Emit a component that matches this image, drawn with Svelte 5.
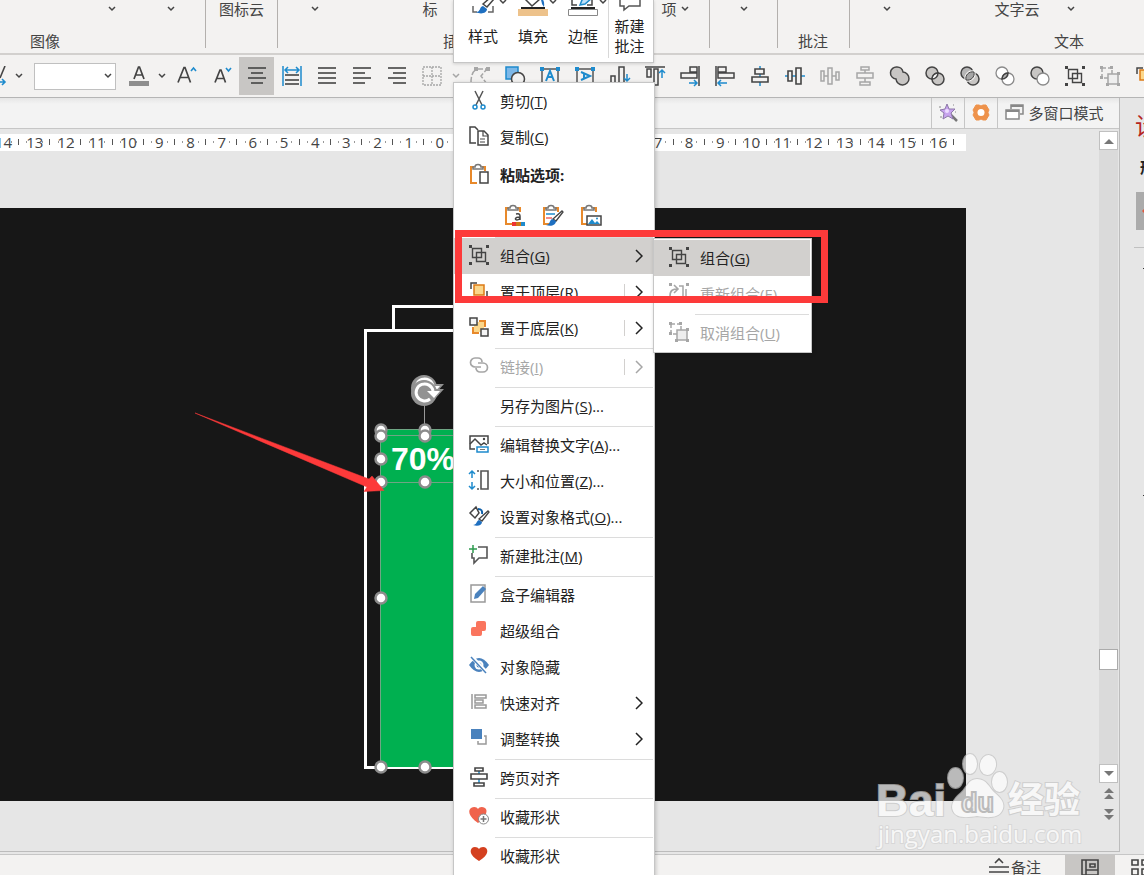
<script>
    const dark = "#444";
    const blue = "#1e8bcd";
    const grey = "#a6a6a6";

    const clipboard = `<path d="M5 3H2v16h6M13 3h3v4" fill="none" stroke="#e8892b" stroke-width="2"/><path d="M4 5V3h2a3 2.500 0 0 1 6 0h2v2z" fill="#fff" stroke="#777" stroke-width="1.500"/>`;

    const lines = (rows) => rows.map(([x, y, w]) => `<path d="M${x} ${y}h${w}" stroke="${dark}" stroke-width="1.6"/>`).join("");

    const groupShape = (c) =>
        `<path d="M3.500 3.500h9v9h-9zM7.500 7.500h9v9h-9z" fill="none" stroke="${c}" stroke-width="1.4"/>
         <path d="M0 0h3v3H0zM17 0h3v3h-3zM0 17h3v3H0zM17 17h3v3h-3z" fill="${c}"/>`;

    const ungroupShape =
        `<path d="M2 2h10v10H2z" fill="none" stroke="${grey}" stroke-width="1.5" stroke-dasharray="4 2"/><path d="M8 8h10v10H8z" fill="#eee" stroke="${grey}" stroke-width="1.5"/>
         <path d="M0 0h3v3H0zM10 0h3v3h-3zM0 10h3v3H0zM17 6h3v3h-3zM6 17h3v3H6zM17 17h3v3h-3z" fill="${grey}"/>`;

    // Every icon is drawn on a 20 x 20 grid
    const icons = {
        fontColor: `<path d="M5 13 9.500 1h1L15 13M6.500 9h7" fill="none" stroke="${dark}" stroke-width="1.7"/><path d="M0 15h20v5H0z" fill="#8e8e8e"/>`,
        fontUp: `<path d="M1 16.500 7 1.500h1l5.500 15M3 11.500h9" fill="none" stroke="${dark}" stroke-width="1.7"/><path d="m14 5 2.500-3L19 5" fill="none" stroke="${blue}" stroke-width="1.6"/>`,
        fontDown: `<path d="M3 16.500 8 4h1l4.500 12.500M5 12.500h7" fill="none" stroke="${dark}" stroke-width="1.7"/><path d="m14 2 2.500 3L19 2" fill="none" stroke="${blue}" stroke-width="1.6"/>`,
        center: lines([[1, 2, 18], [4, 7, 12], [1, 12, 18], [4, 17, 12]]),
        distribute: `<path d="M1 0v20M19 0v20M3 4h14M6 1 3 4l3 3M14 1l3 3-3 3" fill="none" stroke="${blue}" stroke-width="1.500"/>` + lines([[3, 9, 14], [3, 14, 14], [3, 18, 14]]),
        justify: lines([[1, 2, 18], [1, 7, 18], [1, 12, 18], [1, 17, 18]]),
        left: lines([[1, 2, 18], [1, 7, 12], [1, 12, 18], [1, 17, 12]]),
        right: lines([[1, 2, 18], [6, 7, 13], [1, 12, 18], [6, 17, 13]]),
        borders: `<path d="M1 1h18v18H1zM10 1v18M1 10h18" fill="none" stroke="${grey}" stroke-width="1.300" stroke-dasharray="2 1"/>`,
        editPoints: `<path d="M1 17C1 9 3 4 8 3h9l-6 7 6 8" fill="none" stroke="${grey}" stroke-width="1.500" stroke-dasharray="6 2"/><path d="M4 1h4v4H4zM16 1h4v4h-4z" fill="${grey}"/>`,
        shapes: `<path d="M1 1h12v12H1z" fill="#7db8e8" stroke="${blue}" stroke-width="1.500"/><circle cx="13" cy="13" r="6.500" fill="#f3f2f1" stroke="${dark}" stroke-width="1.500"/>`,
        textBox: `<path d="M2 3h16v16H2z" fill="none" stroke="#555" stroke-width="1.500"/><path d="M0 1h4v4H0zM16 1h4v4h-4z" fill="${blue}"/><path d="m6 15 4-10 4 10M7 11h6" fill="none" stroke="${blue}" stroke-width="2"/>`,
        textTurn: `<path d="M2 3h16v16H2z" fill="none" stroke="#555" stroke-width="1.500"/><path d="M0 1h4v4H0zM16 1h4v4h-4z" fill="${blue}"/><path d="m6 6 9 4-9 4M9 7v6" fill="none" stroke="${blue}" stroke-width="2"/>`,
        alignBottom: `<path d="M1 10h4v8H1zM9 1h5v17H9zM0 19h20" fill="none" stroke="${dark}" stroke-width="1.500"/><path d="M17 8v7m-3-3 3 3 3-3" fill="none" stroke="${blue}" stroke-width="1.500"/>`,
        alignTop: `<path d="M0 1h20M2 3h4v8H2zM9 3h4v16H9z" fill="none" stroke="${dark}" stroke-width="1.500"/><path d="M17 12V4m-3 3 3-3 3 3" fill="none" stroke="${blue}" stroke-width="1.500"/>`,
        alignRight: `<path d="M19 0v20M10 1h7v5h-7zM1 7h16v5H1z" fill="none" stroke="${dark}" stroke-width="1.500"/><path d="M9 17h8m-3-3 3 3-3 3" fill="none" stroke="${blue}" stroke-width="1.500"/>`,
        alignLeft: `<path d="M1 0v20M3 1h8v5H3zM3 7h16v5H3z" fill="none" stroke="${dark}" stroke-width="1.500"/><path d="M12 17H3m3-3-3 3 3 3" fill="none" stroke="${blue}" stroke-width="1.500"/>`,
        alignMiddle: `<path d="M10 0v20" stroke="${blue}" stroke-width="1.500"/><path d="M5 3h9v5H5zM2 11h16v5H2z" fill="#f3f2f1" stroke="${dark}" stroke-width="1.600"/>`,
        alignCenter: `<path d="M0 10h20" stroke="${blue}" stroke-width="1.500"/><path d="M3 5h4v10H3zM11 2h5v16h-5z" fill="#f3f2f1" stroke="${dark}" stroke-width="1.600"/>`,
        spreadH: `<path d="M1 5h3v10H1zM8 2h4v16H8zM16 6h3v8h-3zM4 10h4M12 10h4" fill="none" stroke="${grey}" stroke-width="1.500"/>`,
        spreadV: `<path d="M6 1h8v3H6zM2 7h16v5H2zM5 16h10v3H5zM10 4v3M10 12v4" fill="none" stroke="${grey}" stroke-width="1.500"/>`,
        union: `<path d="M7 1a6 6 0 0 1 6 5 6.500 6.500 0 1 1-7 7A6 6 0 1 1 7 1z" fill="#c8c6c4" stroke="${dark}" stroke-width="1.500"/>`,
        combine: `<circle cx="7" cy="7" r="6" fill="#c8c6c4" stroke="${dark}" stroke-width="1.500"/><circle cx="13" cy="13" r="6" fill="#c8c6c4" stroke="${dark}" stroke-width="1.500"/><path d="M7 13a6 6 0 0 1 6-6 6 6 0 0 1-6 6z" fill="#fff" stroke="${dark}" stroke-width="1.500"/>`,
        fragment: `<circle cx="7" cy="7" r="6" fill="#b5b5b5" stroke="${dark}" stroke-width="1.500"/><circle cx="13" cy="13" r="7" fill="#f3f2f1"/><circle cx="13" cy="13" r="6" fill="#c8c6c4" stroke="${dark}" stroke-width="1.500"/><path d="M6 14c-1-5 3-9 8-8 1 5-3 9-8 8z" fill="#a6a6a6" stroke="#f3f2f1" stroke-width="3"/><path d="M6 14c-1-5 3-9 8-8 1 5-3 9-8 8z" fill="#a6a6a6" stroke="${dark}"/>`,
        intersect: `<circle cx="7" cy="7" r="6" fill="#fff" stroke="#8a8a8a" stroke-width="1.300"/><circle cx="13" cy="13" r="6" fill="#fff" stroke="#8a8a8a" stroke-width="1.300"/><path d="M7 13a6 6 0 0 1 6-6 6 6 0 0 1-6 6z" fill="#b5b5b5" stroke="${dark}" stroke-width="1.600"/>`,
        subtract: `<circle cx="7" cy="7" r="6" fill="#c8c6c4" stroke="${dark}" stroke-width="1.500"/><circle cx="13" cy="13" r="6" fill="#fff" stroke="#8a8a8a" stroke-width="1.300"/>`,
        group: groupShape(dark),
        ungroup: ungroupShape,
        regroup: `<path d="M10 3h4v14M6 16h11V6" fill="none" stroke="${grey}" stroke-width="1.500"/><path d="M1 13c0-6 3-7 8-7M5 2l4 4-4 4" fill="none" stroke="${grey}" stroke-width="1.600"/><path d="M0 0h3v3H0zM17 0h3v3h-3zM0 17h3v3H0zM17 17h3v3h-3z" fill="${grey}"/>`,
        front: `<path d="M8 2H2v6M18 10v8h-8" fill="none" stroke="${dark}" stroke-width="1.500"/><path d="M5 4h10v10H5z" fill="#fbd78b" stroke="#dd7b16" stroke-width="1.500"/>`,
        back: `<path d="M10 4h6v6M4 10v6h6" fill="none" stroke="#e8892b" stroke-width="2"/><path d="M5 5h10v10H5z" fill="#fbd78b"/><path d="M1 1h7v7H1zM12 12h7v7h-7z" fill="#f5f5f5" stroke="${dark}" stroke-width="1.500"/>`,
        cut: `<path d="M6 1l7 14M14 1 7 15" stroke="#555" stroke-width="1.500"/><circle cx="6" cy="17" r="2" fill="none" stroke="${blue}" stroke-width="1.500"/><circle cx="14" cy="17" r="2" fill="none" stroke="${blue}" stroke-width="1.500"/>`,
        copy: `<path d="M7 17H1V1h5l3 3" fill="none" stroke="${dark}" stroke-width="1.500"/><path d="M9 5h6l4 4v10H9z" fill="#fff" stroke="${dark}" stroke-width="1.500"/><path d="M14 5v5h5M11 13h5M11 16h5" fill="none" stroke="${dark}" stroke-width="1.200"/>`,
        paste: clipboard + `<path d="M11 8h8v11h-8z" fill="#fff" stroke="${dark}" stroke-width="1.500"/>`,
        pasteTheme: clipboard + `<path d="M12 9c5-1 4 2 4 6M16 12c-6 0-5 3-3 3q2 0 3-2" fill="none" stroke="${dark}" stroke-width="1.500"/><path d="M8 17h4v4H8z" fill="#e33"/><path d="M12 17h5v4h-5z" fill="#d07a18"/><path d="M17 17h4v4h-4z" fill="${blue}"/>`,
        pasteSource: clipboard + `<path d="M4 9h9" stroke="${blue}" stroke-width="1.500"/><path d="M4 13h6" stroke="#e66" stroke-width="1.500"/><path d="m11 14 9-8 1 1-7 9z" fill="#fff" stroke="${dark}" stroke-width="1.300"/><path d="M4 20c4 0 3-4 6-6l4 2c0 4-5 6-10 4z" fill="#1e6fc0"/>`,
        pastePicture: clipboard + `<path d="M7 11h14v9H7z" fill="#fff" stroke="${dark}" stroke-width="1.500"/><path d="m8 19 4-5 3 4 2-2 3 3z" fill="${blue}"/><circle cx="17" cy="13.500" r="1" fill="${blue}"/>`,
        link: `<path d="M12 11H6a4 4 0 0 1 0-9h3a4 4 0 0 1 4 4M9 7h5a4 4 0 0 1 0 9h-3a4 4 0 0 1-4-4" fill="none" stroke="${grey}" stroke-width="1.700"/>`,
        altText: `<path d="M6 15H1V2h18v8" fill="none" stroke="${dark}" stroke-width="1.500"/><path d="m1 10 5-5 6 6 3-2 3 2" fill="none" stroke="${dark}" stroke-width="1.500"/><circle cx="15" cy="5" r="1.200" fill="${dark}"/><path d="M8 13h11v5H8z" fill="#fff" stroke="${blue}" stroke-width="1.500"/><path d="M11 15.500h5" stroke="#777"/>`,
        size: `<path d="M3 1v7M0 4l3-3 3 3M3 12v7M0 16l3 3 3-3" fill="none" stroke="${blue}" stroke-width="1.500"/><path d="M8 1h2M8 19h2" stroke="#555" stroke-width="1.500"/><path d="M12 1h7v18h-7z" fill="none" stroke="#555" stroke-width="1.600"/>`,
        format: `<path d="m1 7 6-6 3 6-4 5z" fill="#fff" stroke="${dark}" stroke-width="1.500"/><path d="M9 3q5 0 4 5" fill="none" stroke="#0c5ea8" stroke-width="2"/><path d="m10 13 9-8 1 1-7 9z" fill="#fff" stroke="${dark}" stroke-width="1.300"/><path d="M4 19c4 0 3-4 6-5l3 2c0 3-4 5-9 3z" fill="#1e6fc0"/>`,
        comment: `<path d="M9 2h9v11H10l-5 5v-5H3V8" fill="none" stroke="#555" stroke-width="1.600"/><path d="M4 0v8M0 4h8" stroke="#2e9b4f" stroke-width="1.500"/>`,
        box: `<path d="M2 1h14v17H2z" fill="none" stroke="#999" stroke-width="1.500"/><path d="M6 10 14 2l3 3-8 9-4 1z" fill="#4a82bd"/>`,
        superGroup: `<path d="M9 1h6q2 0 2 2v6q0 2-2 2h-2v3q0 2-2 2H4q-2 0-2-2V9q0-2 2-2h3V3q0-2 2-2z" fill="#fa755e"/>`,
        hide: `<path d="M0 9q10-14 20 0-10 14-20 0z" fill="#4a82bd"/><circle cx="10" cy="9" r="4.500" fill="#fff"/><circle cx="10" cy="9" r="2.500" fill="#4a82bd"/><path d="m2 0 16 17" stroke="#fff" stroke-width="4"/><path d="m2 1 15 16" stroke="#4a82bd" stroke-width="1.500"/>`,
        quickAlign: `<path d="M3 2v15M6 3h11v3H6zM6 8h8v3H6zM6 13h11v3H6z" fill="none" stroke="#999" stroke-width="1.500"/>`,
        convert: `<path d="M2 1h11v10H2z" fill="#4a82bd"/><path d="M15 8h2v8H9v-3" fill="none" stroke="#999" stroke-width="1.500"/>`,
        pageAlign: `<path d="M10 3v14" stroke="${blue}" stroke-width="1.500"/><path d="M6 1h8v3H6zM2 7h16v5H2zM5 16h10v3H5z" fill="#fff" stroke="${dark}" stroke-width="1.600"/>`,
        heartAdd: `<path d="M9 17C-1 10-1 4 2 2s6-1 7 1c1-2 4-3 7-1s2 8-7 15z" fill="#f0634c"/><circle cx="14.500" cy="13" r="5" fill="#fff" stroke="#888"/><path d="M11.500 13h6M14.500 10v6" stroke="#777" stroke-width="1.500"/>`,
        heart: `<path d="M10 16C0 10 1 5 3 3s6-1 7 1c1-2 5-3 7-1s3 7-7 13z" fill="#d4401f"/>`,
        wand: `<path d="m12 11 7 7" stroke="#777" stroke-width="2.500"/><path d="m9 1 2 5h6l-4 4 2 6-5-3-5 3 1-6-4-3 5-1z" fill="#c7a3ee" stroke="#8d79a8"/><circle cx="9" cy="8" r="2" fill="#ecdcff"/><path d="M1 4h2M2 14h2M15 2h1M17 9h1" stroke="#888"/>`,
        gear: `<path d="M5 2h3l2 1 2-1h3l3 5-1 2v1l1 2-3 5h-3l-2-1-2 1H5l-3-5 1-2V9L2 7z" fill="#ee924b" stroke="#ee924b" stroke-linejoin="round"/><circle cx="10" cy="9.500" r="3.500" fill="#fff"/>`,
        windows: `<path d="M6 6V2h12v9h-3" fill="none" stroke="#888" stroke-width="1.500"/><path d="M6 3h12" stroke="#888" stroke-width="2"/><path d="M1 7h13v9H1z" fill="#fff" stroke="#888" stroke-width="1.500"/><path d="M1 8h13" stroke="#888" stroke-width="2"/>`,
        notes: `<path d="m6 6 4-4 4 4" fill="none" stroke="${dark}" stroke-width="1.600"/><path d="M0 10h20M0 15h20" stroke="${dark}" stroke-width="1.600"/>`,
        normalView: `<path d="M2 3h16v15H2zM6 3v15M6 13h12M10 7h5v3h-5z" fill="none" stroke="${dark}" stroke-width="1.600"/>`,
        sorter: `<path d="M1 3h6v5H1zM11 3h6v5h-6zM1 12h6v6H1zM11 12h6v6h-6z" fill="none" stroke="${dark}" stroke-width="1.600"/>`,
    };

    // Ribbon columns: a width and whatever sits in the middle of it
    const ribbon = [
        { name: "图像", labelStart: 30, width: 206, cols: [{ w: 82 }, { w: 60, drop: true }, { w: 58, drop: true }] },
        { name: "", labelStart: 0, width: 72, cols: [{ w: 71, text: "图标云" }] },
        { name: "插图", labelStart: 165, width: 432, cols: [{ w: 74, drop: true }, { w: 156, text: "标" }, { w: 133 }, { w: 68, text: "项", drop: true }] },
        { name: "", labelStart: 0, width: 68, cols: [{ w: 67, drop: true }] },
        { name: "批注", labelStart: 20, width: 72, cols: [] },
        { name: "文本", labelStart: 204, width: 294, cols: [{ w: 74, drop: true }, { w: 63 }, { w: 60, text: "文字云" }, { w: 48, drop: true }] },
    ];

    const tools = [
        "fontUp", "fontDown", "center", "distribute", "justify", "left", "right", "borders",
        "editPoints", "shapes", "textBox", "textTurn", "alignBottom", "alignTop", "alignRight", "alignLeft",
        "alignMiddle", "alignCenter", "spreadH", "spreadV", "union", "combine", "fragment", "intersect",
        "subtract", "group", "ungroup", "front",
    ];

    const rulerMarks = Array.from({ length: 31 }, (_, i) => Math.abs(i - 14));

    const menu = [
        { icon: "cut", label: "剪切", key: "T" },
        { icon: "copy", label: "复制", key: "C" },
        { heading: "粘贴选项:" },
        { sep: true },
        { icon: "group", label: "组合", key: "G", arrow: true, active: true },
        { icon: "front", label: "置于顶层", key: "R", arrow: true, split: true },
        { icon: "back", label: "置于底层", key: "K", arrow: true, split: true },
        { sep: true },
        { icon: "link", label: "链接", key: "I", arrow: true, split: true, disabled: true },
        { sep: true },
        { label: "另存为图片", key: "S", more: true },
        { sep: true },
        { icon: "altText", label: "编辑替换文字", key: "A", more: true },
        { icon: "size", label: "大小和位置", key: "Z", more: true },
        { icon: "format", label: "设置对象格式", key: "O", more: true },
        { sep: true },
        { icon: "comment", label: "新建批注", key: "M" },
        { sep: true },
        { icon: "box", label: "盒子编辑器" },
        { icon: "superGroup", label: "超级组合" },
        { icon: "hide", label: "对象隐藏" },
        { icon: "quickAlign", label: "快速对齐", arrow: true },
        { icon: "convert", label: "调整转换", arrow: true },
        { sep: true },
        { icon: "pageAlign", label: "跨页对齐" },
        { sep: true },
        { icon: "heartAdd", label: "收藏形状" },
        { sep: true },
        { icon: "heart", label: "收藏形状" },
    ];

    const submenu = [
        { icon: "group", label: "组合", key: "G", active: true },
        { icon: "regroup", label: "重新组合", key: "E", disabled: true },
        { sep: true },
        { icon: "ungroup", label: "取消组合", key: "U", disabled: true },
    ];

    const handles = [
        [381, 222], [381, 228], [381, 251], [381, 274], [381, 390], [381, 559],
        [425, 222], [425, 228], [425, 274], [425, 559],
    ];
</script>

{#snippet icon(name)}
    <svg class="icon" width="20" height="20" viewBox="0 0 20 20" aria-hidden="true">{@html icons[name]}</svg>
{/snippet}

{#snippet chevron()}
    <svg class="chevron" width="8" height="6" viewBox="0 0 8 6" aria-hidden="true">
        <path d="m1 1 3 3 3-3" fill="none" stroke="currentColor" stroke-width="1.5" />
    </svg>
{/snippet}

{#snippet entry(item)}
    {#if item.sep}
        <hr />
    {:else}
        <button class="entry" class:active={item.active} disabled={item.disabled}>
            <span class="slot">{#if item.icon}{@render icon(item.icon)}{/if}</span>
            <span class="name">{item.label}{#if item.key}(<u>{item.key}</u>){/if}{#if item.more}...{/if}</span>
            {#if item.arrow}
                <span class="more" class:split={item.split}>
                    <svg width="8" height="14" viewBox="0 0 8 14" aria-hidden="true">
                        <path d="m1 1 6 6-6 6" fill="none" stroke="currentColor" stroke-width="1.5" />
                    </svg>
                </span>
            {/if}
        </button>
    {/if}
{/snippet}

<div class="app">
    <header class="ribbon">
        {#each ribbon as group}
            <section style="width: {group.width}px">
                <div class="cols">
                    {#each group.cols as col}
                        <span class="col" style="width: {col.w}px">
                            {col.text ?? ""}
                            {#if col.drop}{@render chevron()}{/if}
                        </span>
                    {/each}
                </div>
                <div class="group-name" style="padding-left: {group.labelStart}px">{group.name}</div>
            </section>
        {/each}
    </header>

    <div class="toolbar">
        <button class="cut-off" aria-label="文字方向">
            <svg width="8" height="20" viewBox="0 0 8 20">
                <path d="M0 12 5 0" stroke="#444" stroke-width="1.6" />
                <path d="M0 16h5M2 13l3 3-3 3" fill="none" stroke="#1e8bcd" stroke-width="1.6" />
            </svg>
        </button>
        <span class="drop">{@render chevron()}</span>
        <span class="size-box">
            <select aria-label="字号"><option></option></select>
            {@render chevron()}
        </span>
        <button class="tool color" aria-label="fontColor">{@render icon("fontColor")}</button>
        <span class="drop">{@render chevron()}</span>
        <div class="tools">
            {#each tools as tool}
                <button class="tool" class:pressed={tool === "center"} aria-label={tool}>{@render icon(tool)}</button>
                {#if tool === "borders"}
                    <span class="drop faded">{@render chevron()}</span>
                {/if}
            {/each}
        </div>
    </div>

    <div class="body">
        <main>
            <div class="tabs">
                <button class="tab" aria-label="魔棒">{@render icon("wand")}</button>
                <button class="tab" aria-label="设置">{@render icon("gear")}</button>
                <button class="tab wide">{@render icon("windows")}多窗口模式</button>
            </div>
            <div class="workspace">
                <div class="stage">
                    <div class="ruler">
                        <div class="marks">
                            {#each rulerMarks as mark}
                                <span>{mark}</span>
                            {/each}
                        </div>
                    </div>
                    <div class="slide">
                        <svg class="drawing" width="700" height="593" viewBox="0 0 700 593">
                            <path d="M393.500 123V98.500H560V123" fill="none" stroke="#fff" stroke-width="3" />
                            <path d="M365.500 122.500H590v437H365.500z" fill="none" stroke="#fff" stroke-width="3" />
                            <path d="M380 221h180v338H380z" fill="#00b050" />
                            <path d="M380.500 221.500H560M380.500 227.500H560M380.500 274.500H560M380.500 221v338" fill="none" stroke="#6fa584" />
                            <text x="391" y="262">70%</text>
                            <path d="M424.500 190v35" stroke="#999" />
                            {#each handles as [x, y]}
                                <circle cx={x} cy={y} r="5.500" fill="#fff" stroke="#8c8c8c" stroke-width="2.500" />
                            {/each}
                            {#each [180, 185] as y}
                                <circle cx="424" cy={y} r="13" fill="#929292" />
                                <path d="M430 {y - 4}h14l-10 11z" fill="#929292" />
                                <path d="M430 {y + 6}a8.500 8.500 0 1 1 3-8" fill="none" stroke="#fff" stroke-width="3" />
                                <path d="M427 {y - 2}h13l-6 7z" fill="#fff" />
                            {/each}
                            <path d="M195 205 369 271l3-3 12 14.500-20 1 3-4.500z" fill="#fd3a3a" stroke="#fd3a3a" stroke-width="0.5" />
                        </svg>
                    </div>
                </div>
                <div class="scrollbar">
                    <button aria-label="向上"><svg width="10" height="6"><path d="M0 6 5 1l5 5z" fill="#777" /></svg></button>
                    <div class="track"><span class="before"></span><span class="thumb"></span><span class="after"></span></div>
                    <button aria-label="向下"><svg width="10" height="6"><path d="m0 0 5 5 5-5z" fill="#777" /></svg></button>
                    <button class="page" aria-label="上一张"><svg width="10" height="11"><path d="m0 5 5-5 5 5zM0 11l5-5 5 5z" fill="#777" /></svg></button>
                    <button class="page" aria-label="下一张"><svg width="10" height="11"><path d="m0 0 5 5 5-5zM0 6l5 5 5-5z" fill="#777" /></svg></button>
                </div>
            </div>
        </main>
        <aside>
            <h2>设置形状格式</h2>
            <h3>形状选项</h3>
            <div class="pane-tab"><svg width="20" height="20"><path d="m0 10 4-4v8z" fill="#e2583d" /></svg></div>
            <div class="pane-line"></div>
            <div class="fold"></div>
            <div class="fold"></div>
        </aside>
    </div>

    <footer>
        <button class="status">{@render icon("notes")}备注</button>
        <button class="view pressed" aria-label="普通视图">{@render icon("normalView")}</button>
        <button class="view last" aria-label="幻灯片浏览">{@render icon("sorter")}</button>
    </footer>

    <svg class="watermark" width="220" height="110" viewBox="0 0 220 110">
        <g fill="#fff" stroke="#c4c4c4" stroke-width="2" paint-order="stroke" opacity="0.7">
            <text class="logo" x="6" y="71">Bai</text>
            <text class="logo-cn" x="138" y="68">经验</text>
            <text class="site" x="8" y="98">jingyan.baidu.com</text>
            <ellipse cx="85.500" cy="33" rx="7.500" ry="10" />
            <ellipse cx="100" cy="19" rx="7" ry="10" />
            <ellipse cx="118" cy="20" rx="8" ry="10" transform="rotate(10 118 20)" />
            <ellipse cx="129.500" cy="37" rx="7.500" ry="10" />
            <path d="M107 34c10 0 12 9 18 14s11 11 7 18-13 7-25 5c-11 2-21 2-24-5s2-13 8-18 7-14 16-14z" />
        </g>
        <text class="du" x="91" y="67">du</text>
    </svg>

    <div class="mini">
        <button>
            <svg width="50" height="18" viewBox="0 0 50 18">
                <path d="M15 6v6h4M30 12h5V6" fill="none" stroke="#666" stroke-width="1.5" />
                <path d="m25 4 8-7 3 2-7 8z" fill="#fff" stroke="#444" stroke-width="1.5" />
                <path d="M18 12c5 0 3-5 7-6l4 3c0 4-6 6-11 3z" fill="#1e6fc0" />
                <path d="m42 0 3 3 3-3" fill="none" stroke="#444" stroke-width="1.5" />
            </svg>
            样式
        </button>
        <button>
            <svg width="50" height="18" viewBox="0 0 50 18">
                <path d="m17-1 7 7 8-7" fill="none" stroke="#444" stroke-width="1.5" />
                <path d="M33-2q4 2 3 9-3-3-3-9z" fill="#1e6fc0" />
                <path d="M13 7h24v2H13z" fill="#222" />
                <path d="M10 9h30v7H10z" fill="#edc28b" />
                <path d="m42 0 3 3 3-3" fill="none" stroke="#444" stroke-width="1.5" />
            </svg>
            填充
        </button>
        <button>
            <svg width="50" height="18" viewBox="0 0 50 18">
                <path d="M14-1v6h5M34 0v5h-5" fill="none" stroke="#444" stroke-width="1.5" />
                <path d="m22 5 2-5 7-5 3 3-7 6z" fill="#bfe0f7" stroke="#1e8bcd" stroke-width="1.5" />
                <path d="M13 7h24v2H13z" fill="#222" />
                <path d="M10.500 9.500h29v6h-29z" fill="#fff" stroke="#888" />
                <path d="m42 0 3 3 3-3" fill="none" stroke="#444" stroke-width="1.5" />
            </svg>
            边框
        </button>
        <button class="two-line">
            <svg width="22" height="16" viewBox="0 0 22 16">
                <path d="M1-1v7h4v4l5-4h11v-7" fill="none" stroke="#555" stroke-width="1.5" />
            </svg>
            新建批注
        </button>
    </div>

    <div class="menu">
        {#each menu as item}
            {#if item.heading}
                <div class="heading">
                    <span class="slot">{@render icon("paste")}</span>
                    <span class="name">{item.heading}</span>
                </div>
                <div class="paste-row">
                    <button aria-label="使用目标主题">{@render icon("pasteTheme")}</button>
                    <button aria-label="保留源格式">{@render icon("pasteSource")}</button>
                    <button aria-label="图片">{@render icon("pastePicture")}</button>
                </div>
            {:else}
                {@render entry(item)}
            {/if}
        {/each}
    </div>

    <div class="menu submenu">
        {#each submenu as item}
            {@render entry(item)}
        {/each}
    </div>

    <div class="mark"></div>
</div>

<style>
    :global(body) {
        margin: 0;
    }

    .app {
        position: relative;
        display: flex;
        flex-direction: column;
        height: 100vh;
        overflow: hidden;
        background: #e6e6e6;
        color: #444;
        font-family: "Open Sans", "Noto Sans CJK SC", sans-serif;
        font-size: 15px;
        line-height: 20px;
    }

    button {
        display: flex;
        align-items: center;
        justify-content: center;
        flex: none;
        margin: 0;
        padding: 0;
        border: 0;
        background: none;
        color: inherit;
        font: inherit;
    }

    svg {
        flex: none;
    }

    .icon {
        overflow: visible;
    }

    /* Ribbon */
    .ribbon {
        display: flex;
        flex: none;
        height: 53px;
        border-bottom: 2px solid #d2d0ce;
        background: #f3f2f1;
        white-space: nowrap;
    }

    .ribbon section {
        box-sizing: border-box;
        flex: none;
        height: 48px;
        border-right: 1px solid #b3b0ad;
    }

    .ribbon section:last-child {
        border-right: 0;
    }

    .cols {
        display: flex;
        height: 31px;
    }

    .col {
        display: flex;
        align-items: center;
        justify-content: center;
        gap: 4px;
        height: 18px;
    }

    /* Quick toolbar */
    .toolbar {
        display: flex;
        align-items: center;
        flex: none;
        height: 42px;
        border-bottom: 1px solid #b5b5b5;
        background: #f3f2f1;
    }

    .cut-off {
        width: 12px;
        justify-content: flex-start;
    }

    .drop {
        display: flex;
        justify-content: center;
        flex: none;
        width: 13px;
    }

    .faded {
        color: #a6a6a6;
    }

    .size-box {
        display: flex;
        align-items: center;
        flex: none;
        margin: 0 6px 0 9px;
    }

    .size-box select {
        width: 82px;
        height: 27px;
        border: 1px solid #c0c0c0;
        background: #fff;
        appearance: none;
    }

    .size-box .chevron {
        margin-left: -12px;
        margin-right: 4px;
    }

    .tools {
        display: flex;
        align-items: center;
        flex: 1;
        min-width: 0;
        margin-left: 1px;
        overflow: hidden;
    }

    .tool {
        width: 35px;
        height: 38px;
    }

    .color {
        width: 33px;
    }

    .pressed {
        background: #c8c6c4;
    }

    /* Document area */
    .body {
        display: flex;
        flex: 1;
        min-height: 0;
    }

    main {
        display: flex;
        flex: 1;
        flex-direction: column;
        min-width: 0;
        border-right: 1px solid #bcbcbc;
        border-bottom: 1px solid #bcbcbc;
    }

    .tabs {
        display: flex;
        justify-content: flex-end;
        flex: none;
        height: 30px;
        border-bottom: 1px solid #c6c6c6;
        background: linear-gradient(#e6e6e6, #f3f3f3 6px);
    }

    .tab {
        width: 33px;
        border-left: 1px solid #c6c6c6;
    }

    .wide {
        gap: 3px;
        width: 122px;
        padding-right: 8px;
    }

    .workspace {
        display: flex;
        flex: 1;
        min-height: 0;
    }

    .stage {
        display: flex;
        flex: 1;
        flex-direction: column;
        min-width: 0;
        padding: 5px 133px 50px 0;
    }

    .ruler {
        flex: none;
        height: 17px;
        margin-bottom: 57px;
        overflow: hidden;
        background: #fff;
    }

    .marks {
        display: grid;
        grid-template-columns: repeat(31, 1fr);
        margin: 0 12px 0 -12px;
        line-height: 16px;
        text-align: center;
    }

    .marks span {
        background:
            linear-gradient(#555, #555) 100% 50% / 1px 6px no-repeat,
            linear-gradient(#999, #999) 24% 50% / 1px 2px no-repeat,
            linear-gradient(#999, #999) 76% 50% / 1px 2px no-repeat;
    }

    .slide {
        flex: 1;
        min-height: 0;
        overflow: hidden;
        background: #171717;
    }

    .drawing text {
        fill: #fff;
        font: bold 32px "Liberation Sans", sans-serif;
    }

    .scrollbar {
        display: flex;
        flex: none;
        flex-direction: column;
        width: 19px;
        margin: 2px 1px 26px 0;
    }

    .scrollbar button {
        box-sizing: border-box;
        height: 19px;
        border: 1px solid #c0c0c0;
        background: #fff;
    }

    .scrollbar .page {
        height: 21px;
        border: 0;
        background: none;
    }

    .track {
        display: flex;
        flex: 1;
        flex-direction: column;
        background: #dadada;
    }

    .before {
        flex: 500;
    }

    .after {
        flex: 94;
    }

    .thumb {
        box-sizing: border-box;
        height: 21px;
        border: 1px solid #ababab;
        background: #fff;
    }

    aside {
        box-sizing: border-box;
        flex: none;
        width: 24px;
        padding: 14px 0 0 15px;
        overflow: hidden;
        white-space: nowrap;
    }

    aside h2 {
        margin: 0 0 17px;
        color: #b5261e;
        font-size: 24px;
        font-weight: normal;
        line-height: 28px;
    }

    aside h3 {
        margin: 0 0 15px 5px;
        color: #222;
        font-size: 15px;
        line-height: 20px;
    }

    .pane-tab {
        display: flex;
        align-items: center;
        height: 38px;
        margin-left: 1px;
        padding-left: 6px;
        background: #ababab;
    }

    .pane-line {
        height: 1px;
        margin: 17px 0 20px -1px;
        background: #c0c0c0;
    }

    .fold {
        height: 1px;
        margin: 0 0 226px 8px;
        background: #333;
    }

    /* Status bar */
    footer {
        display: flex;
        align-items: flex-start;
        justify-content: flex-end;
        flex: none;
        height: 20px;
        margin-top: 2px;
        overflow: hidden;
        border-top: 1px solid #c6c6c6;
        background: #f3f2f1;
    }

    footer button {
        height: 24px;
    }

    .status {
        gap: 2px;
        margin-right: 24px;
    }

    .view {
        width: 50px;
    }

    .last {
        width: 29px;
        padding-left: 16px;
        box-sizing: border-box;
        justify-content: flex-start;
    }

    .watermark {
        position: absolute;
        right: 54px;
        bottom: 20px;
    }

    .logo {
        font: bold 45px "Liberation Sans", sans-serif;
    }

    .logo-cn {
        font: bold 36px "Noto Sans CJK SC", sans-serif;
    }

    .site {
        font: 24px "Open Sans", sans-serif;
        stroke: #d2d2d2;
    }

    .du {
        fill: #eee;
        stroke: #bbb;
        stroke-width: 2px;
        font: bold 27px "Liberation Sans", sans-serif;
    }

    /* Floating mini toolbar */
    .mini {
        position: absolute;
        top: 0;
        left: 453px;
        box-sizing: border-box;
        display: flex;
        width: 201px;
        height: 63px;
        padding-left: 4px;
        border: 1px solid #c6c6c6;
        border-top: 0;
        background: #fff;
        color: #222;
        box-shadow: 0 1px 3px rgba(0, 0, 0, 0.15);
    }

    .mini button {
        flex-direction: column;
        justify-content: flex-start;
        gap: 8px;
        width: 50px;
    }

    .mini .two-line {
        gap: 0;
        width: 42px;
        height: 58px;
        padding: 0 5px;
        border-left: 1px solid #d8d8d8;
    }

    /* Context menus */
    .menu {
        position: absolute;
        top: 82px;
        left: 453px;
        box-sizing: border-box;
        width: 202px;
        padding-bottom: 3px;
        border: 1px solid #c6c6c6;
        background: #fff;
        color: #222;
        box-shadow: 1px 1px 4px rgba(0, 0, 0, 0.2);
    }

    .submenu {
        top: 238px;
        left: 653px;
        width: 159px;
        padding: 1px 1px 1px 0;
    }

    .entry,
    .heading {
        display: flex;
        align-items: center;
        justify-content: flex-start;
        box-sizing: border-box;
        width: 100%;
        height: 36px;
        padding-left: 15px;
        white-space: nowrap;
    }

    .active {
        background: #d2d0ce;
    }

    .entry:disabled {
        color: #a6a6a6;
    }

    .heading {
        height: 40px;
        font-weight: bold;
    }

    .slot {
        display: flex;
        width: 20px;
        margin-right: 11px;
        padding-bottom: 2px;
    }

    .name {
        flex: 1;
        text-align: left;
    }

    .more {
        display: flex;
        align-items: center;
        justify-content: flex-end;
        width: 18px;
        height: 16px;
        padding-right: 11px;
    }

    .split {
        border-left: 1px solid #d2d0ce;
    }

    .paste-row {
        display: flex;
        align-items: center;
        gap: 18px;
        height: 40px;
        padding-left: 50px;
    }

    hr {
        height: 1px;
        margin: 2px 1px 0 41px;
        border: 0;
        background: #dcdcdc;
    }

    .mark {
        position: absolute;
        top: 230px;
        left: 455px;
        box-sizing: border-box;
        width: 373px;
        height: 73px;
        border: 7px solid #fd3a3a;
        pointer-events: none;
    }
</style>
